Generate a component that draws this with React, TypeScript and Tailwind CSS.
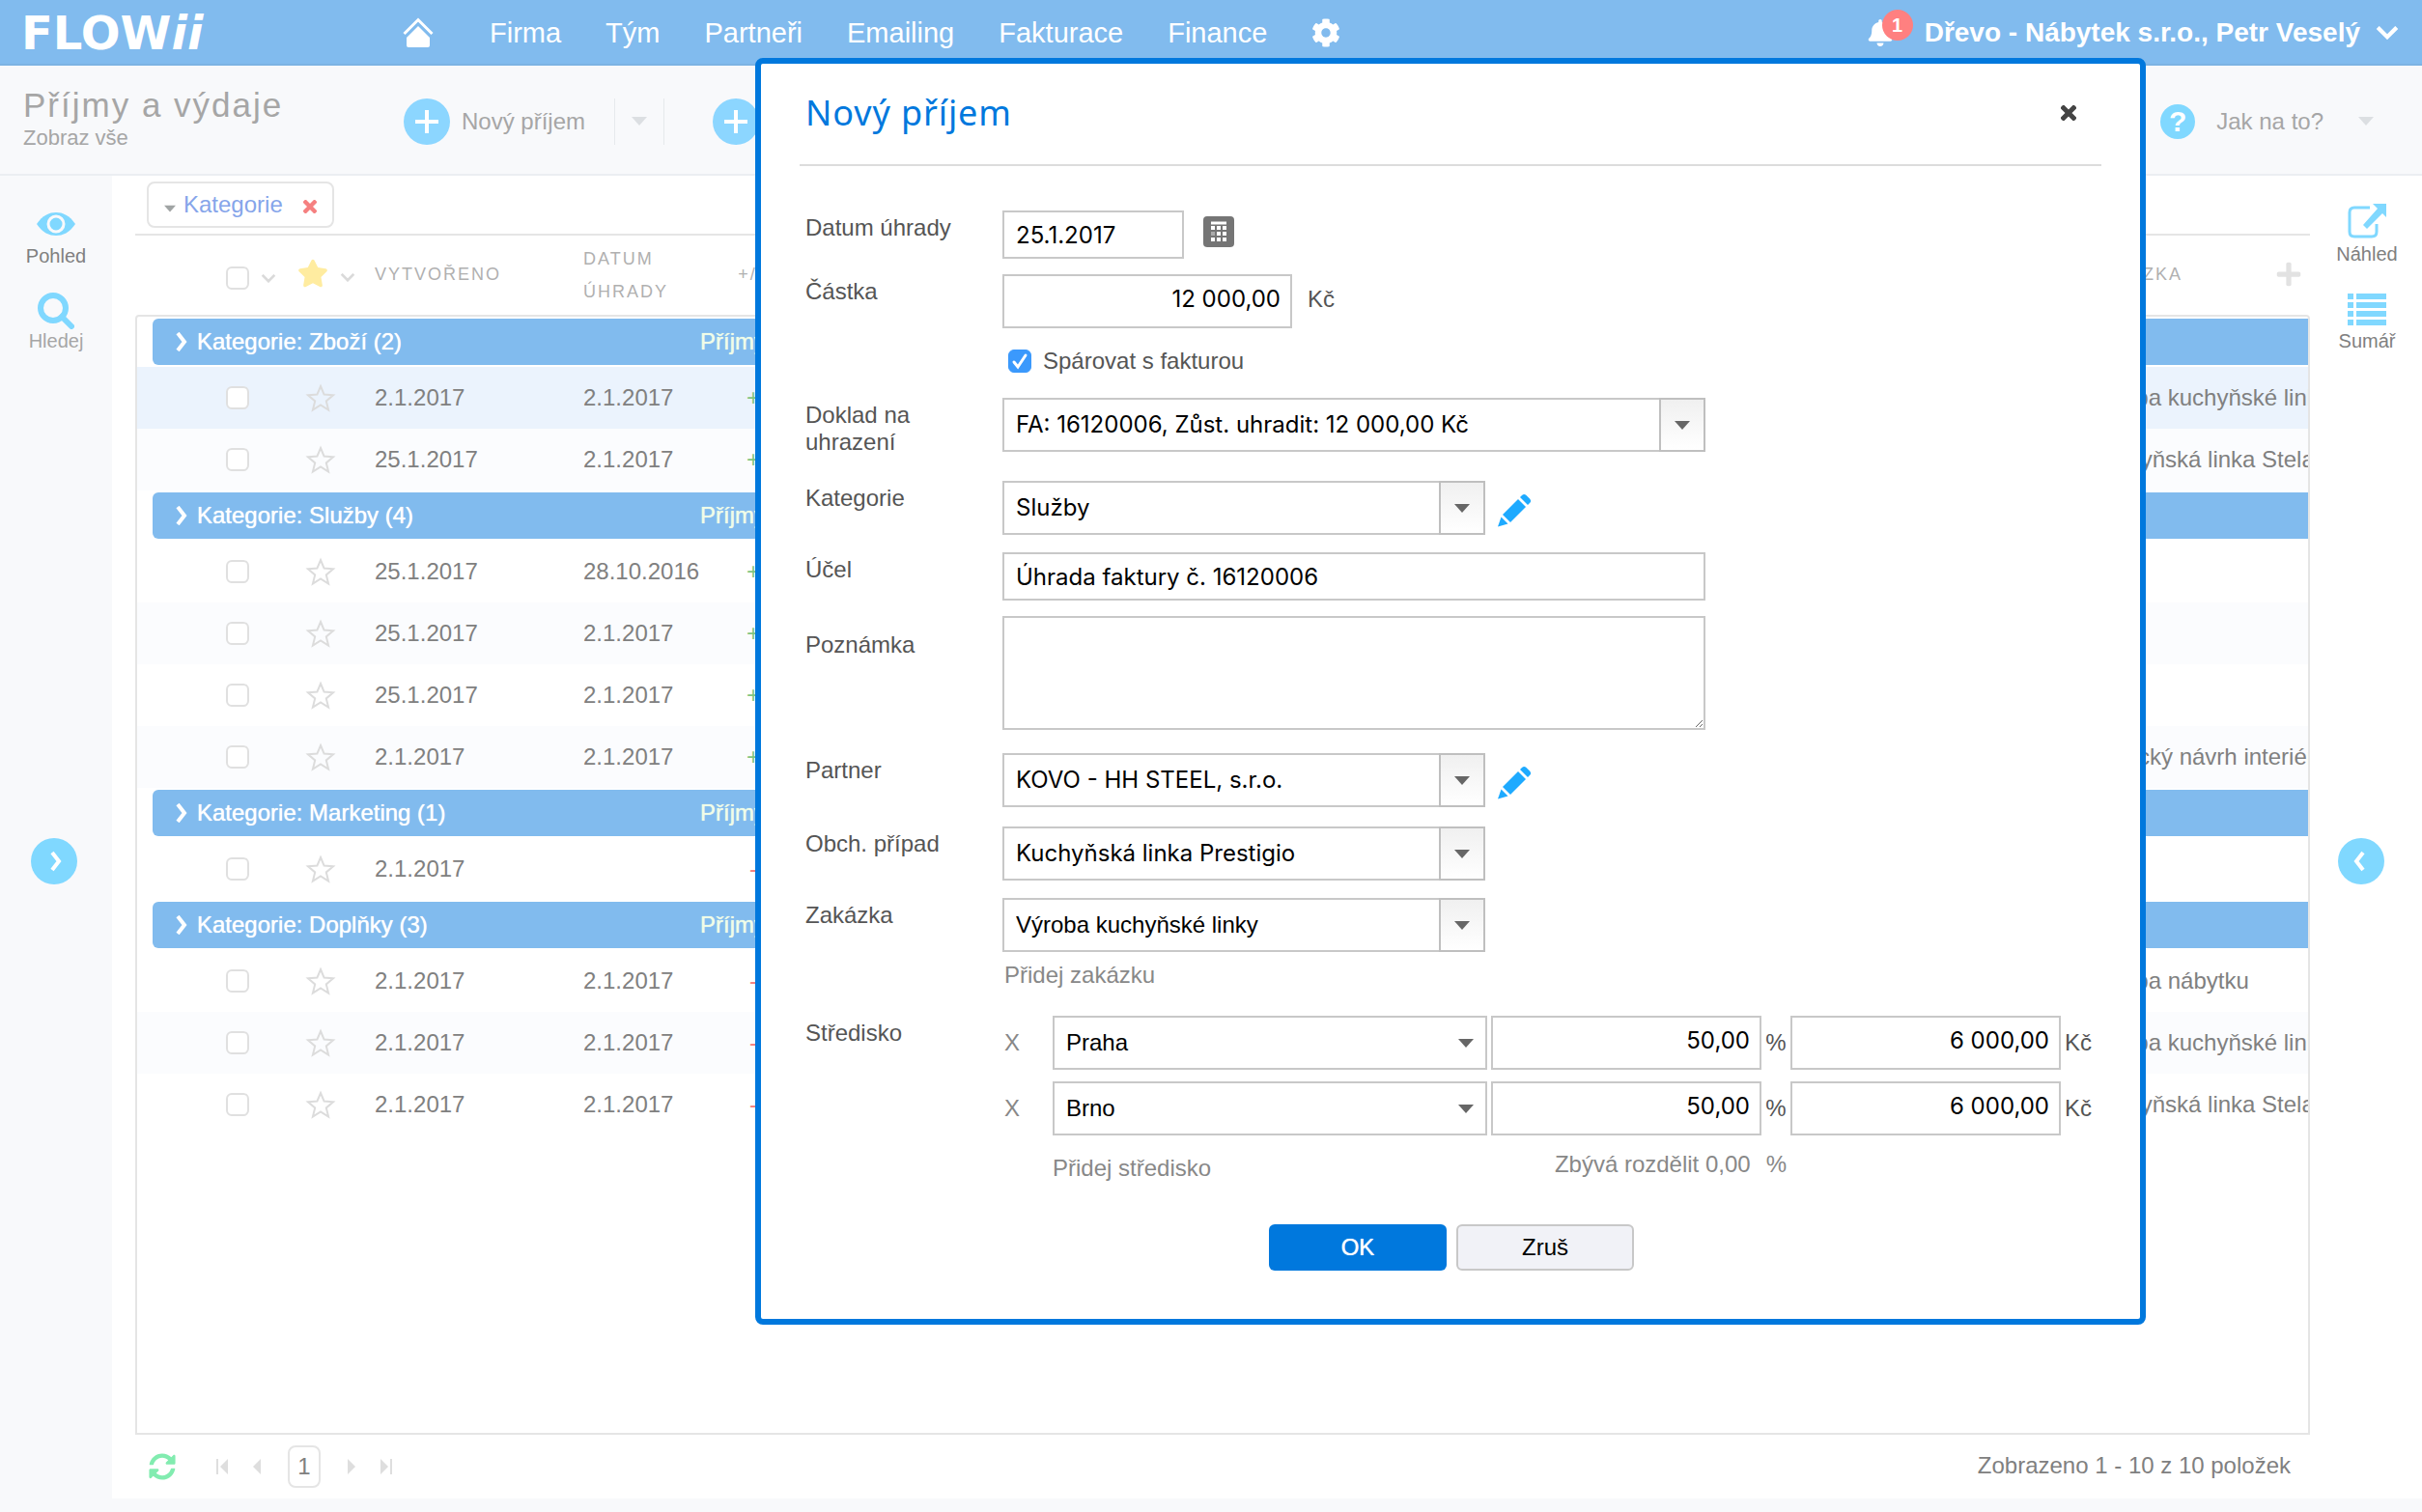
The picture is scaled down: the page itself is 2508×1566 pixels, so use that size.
import { ReactNode, useState } from "react";
import { FaBell, FaCog, FaPlus, FaStar, FaSyncAlt } from "react-icons/fa";

const nav = ["Firma", "Tým", "Partneři", "Emailing", "Fakturace", "Finance"];

type Row = {
  created: string;
  paid: string;
  sign: "+" | "-";
  order: string;
  active?: boolean;
  odd?: boolean;
};

const groups: { name: string; rows: Row[] }[] = [
  {
    name: "Kategorie: Zboží (2)",
    rows: [
      { created: "2.1.2017", paid: "2.1.2017", sign: "+", order: "Výroba kuchyňské linky", active: true },
      { created: "25.1.2017", paid: "2.1.2017", sign: "+", order: "Kuchyňská linka Stela", odd: true },
    ],
  },
  {
    name: "Kategorie: Služby (4)",
    rows: [
      { created: "25.1.2017", paid: "28.10.2016", sign: "+", order: "" },
      { created: "25.1.2017", paid: "2.1.2017", sign: "+", order: "", odd: true },
      { created: "25.1.2017", paid: "2.1.2017", sign: "+", order: "" },
      { created: "2.1.2017", paid: "2.1.2017", sign: "+", order: "Grafický návrh interiéru", odd: true },
    ],
  },
  {
    name: "Kategorie: Marketing (1)",
    rows: [{ created: "2.1.2017", paid: "", sign: "-", order: "" }],
  },
  {
    name: "Kategorie: Doplňky (3)",
    rows: [
      { created: "2.1.2017", paid: "2.1.2017", sign: "-", order: "Výroba nábytku" },
      { created: "2.1.2017", paid: "2.1.2017", sign: "-", order: "Výroba kuchyňské linky", odd: true },
      { created: "2.1.2017", paid: "2.1.2017", sign: "-", order: "Kuchyňská linka Stela" },
    ],
  },
];

const Caret = ({ className }: { className: string }) => (
  <svg viewBox="0 0 16 9" className={className} fill="currentColor">
    <path d="M0 0h16L8 9z" />
  </svg>
);

const Chevron = ({ className }: { className: string }) => (
  <svg viewBox="0 0 12 20" className={className} fill="none" stroke="currentColor" strokeWidth="4">
    <path d="M2 1l7 9-7 9" />
  </svg>
);

const ChevronDown = ({ className }: { className: string }) => (
  <svg viewBox="0 0 16 10" className={className} fill="none" stroke="currentColor" strokeWidth="3">
    <path d="M1 1l7 7 7-7" />
  </svg>
);

const Cross = ({ className }: { className: string }) => (
  <svg viewBox="0 0 16 16" className={className} fill="none" stroke="currentColor" strokeWidth="5">
    <path d="M1 1l14 14M15 1L1 15" />
  </svg>
);

const StarOutline = () => (
  <svg viewBox="0 0 32 30" className="h-[30px] w-8" fill="none" stroke="#dcdcdc" strokeWidth="2">
    <path d="M16 3l3.6 8.600 9.400.7-7.200 6.100 2.300 9.100-8.100-5-8.100 5 2.300-9.100L3 12.300l9.400-.7z" />
  </svg>
);

const PencilIcon = () => (
  <svg viewBox="0 0 36 36" className="size-9" fill="#1eaaff">
    <path d="M26 3c1.500-1.500 3-1.500 4.500 0l3.500 3.500c1.500 1.500 1.500 3 0 4.500l-2 2-8-8z" />
    <path d="M22 7l8 8-16 16-8-8z" />
    <path d="M4.500 25.500l7 7L1 35.500z" />
  </svg>
);

const CalendarIcon = () => (
  <svg viewBox="0 0 32 32" className="size-8">
    <rect width="32" height="32" rx="4" fill="#757575" />
    <path d="M8 7h16" stroke="#fff" strokeWidth="3" />
    <path
      d="M8 12h4M14 12h4M20 12h4M14 18h4M20 18h4M8 24h4M14 24h4M20 24h4"
      stroke="#fff"
      strokeWidth="4"
    />
    <path d="M8 18h4" stroke="#aaa" strokeWidth="4" />
  </svg>
);

const HomeIcon = () => (
  <svg viewBox="0 0 32 32" className="size-8">
    <path d="M1.500 17L16 2.500 30.500 17" fill="none" stroke="#fff" strokeWidth="3" />
    <path d="M16 9l12 12v8q0 2-2 2H6q-2 0-2-2v-8z" fill="#fff" />
  </svg>
);

const EyeIcon = () => (
  <svg viewBox="0 0 40 26" className="h-[26px] w-10">
    <path d="M0 13C6 4 13 1 20 1s14 3 20 12c-6 9-13 12-20 12S6 22 0 13z" fill="#80d8ff" />
    <circle cx="20" cy="13" r="8" fill="#80d8ff" stroke="#f8f9fb" strokeWidth="3" />
  </svg>
);

const SearchIcon = () => (
  <svg viewBox="0 0 38 38" className="size-[38px]" fill="none" stroke="#80d8ff">
    <circle cx="16" cy="16" r="13" strokeWidth="6" />
    <path d="M25 25l10 10" strokeWidth="6" strokeLinecap="round" />
  </svg>
);

const PreviewIcon = () => (
  <svg viewBox="0 0 40 36" className="h-9 w-10">
    <path
      d="M23 4H7Q2 4 2 9v20q0 5 5 5h18q5 0 5-5V21"
      fill="none"
      stroke="#80d8ff"
      strokeWidth="3"
    />
    <path d="M26 0h14v14l-4-4-16 16-4-4L31 5z" fill="#80d8ff" />
  </svg>
);

const SummaryIcon = () => (
  <svg viewBox="0 0 40 34" className="h-[34px] w-10" stroke="#80d8ff" strokeWidth="6">
    <path d="M0 4h6M9 4h31M0 13h6M9 13h31M0 22h6M9 22h31M0 31h6M9 31h31" />
  </svg>
);

const RowCheck = ({ label }: { label: string }) => (
  <input
    type="checkbox"
    aria-label={label}
    className="block size-6 appearance-none rounded-md border-2 border-[#e0e0e0] bg-white"
  />
);

const Columns = () => (
  <colgroup>
    <col className="w-[150px]" />
    <col className="w-24" />
    <col className="w-[216px]" />
    <col className="w-36" />
    <col className="w-16" />
    <col />
    <col className="w-[228px]" />
  </colgroup>
);

const Header = () => (
  <header className="flex h-[68px] items-center border-b-2 border-[#7cb3e3] bg-[#81bbee] pt-0.5 text-[28px] text-white">
    <a
      href="#"
      className="ml-[22px] w-[395px] font-['DejaVu_Sans',sans-serif] text-5xl leading-[60px] font-bold"
    >
      FLOW<em>ii</em>
    </a>
    <nav className="flex items-center gap-[46px] text-[29px]">
      <a href="#" aria-label="Domů" className="mr-3">
        <HomeIcon />
      </a>
      {nav.map((item) => (
        <a key={item} href="#">
          {item}
        </a>
      ))}
      <a href="#" aria-label="Nastavení">
        <FaCog className="size-[30px]" />
      </a>
    </nav>
    <div className="mr-6 ml-auto flex items-center">
      <button aria-label="Upozornění" className="relative mr-8">
        <FaBell className="size-7" />
        <span className="absolute -top-2.5 left-4 flex size-8 items-center justify-center rounded-full bg-[#ff8080] text-xl font-bold">
          1
        </span>
      </button>
      <button className="flex items-center gap-4 font-bold">
        Dřevo - Nábytek s.r.o., Petr Veselý
        <ChevronDown className="h-[14px] w-6" />
      </button>
    </div>
  </header>
);

const PlusCircle = () => (
  <span className="flex size-12 items-center justify-center rounded-full bg-[#8cd6ff]">
    <svg viewBox="0 0 24 24" className="size-6" stroke="#fff" strokeWidth="4">
      <path d="M0 12h24M12 0v24" />
    </svg>
  </span>
);

const Toolbar = () => (
  <div className="flex h-[114px] items-center border-b-2 border-[#ebeef2] bg-[#f8f9fb] pt-[3px] text-[#a6a6a6]">
    <div className="ml-6 w-[394px] pb-1.5">
      <h1 className="text-[35px] leading-10 tracking-[2px]">Příjmy a výdaje</h1>
      <a href="#" className="block text-[22px] leading-7">
        Zobraz vše
      </a>
    </div>
    <button className="flex items-center gap-3">
      <PlusCircle />
      Nový příjem
    </button>
    <button
      aria-label="Další možnosti"
      className="ml-[30px] flex h-12 w-[52px] items-center justify-center border-x border-[#e6e9ec] text-[#dcdfe2]"
    >
      <Caret className="h-[9px] w-4" />
    </button>
    <button aria-label="Nový výdaj" className="ml-[50px]">
      <PlusCircle />
    </button>
    <button className="mr-[50px] ml-auto flex items-center">
      <span className="mr-[22px] flex size-9 items-center justify-center rounded-full bg-[#80d8ff] text-[30px] font-bold text-white">
        ?
      </span>
      Jak na to?
      <Caret className="ml-9 h-[9px] w-4 text-[#dcdfe2]" />
    </button>
  </div>
);

const GroupRow = ({ name }: { name: string }) => (
  <tr>
    <td colSpan={7} className="p-0">
      <div className="my-0.5 ml-4 flex h-12 items-center rounded-l-md bg-[#81bbee] pl-6 text-white">
        <Chevron className="mr-[10px] h-5 w-3" />
        <span className="w-[521px] [text-shadow:0_0_1px_#fff]">{name}</span>
        <span className="text-[#f0fde8] [text-shadow:0_0_1px_#f0fde8]">Příjmy</span>
      </div>
    </td>
  </tr>
);

const Grid = () => (
  <main className="flex min-w-0 flex-1 flex-col bg-white pr-[2px] pl-6 text-[#808080]">
    <div className="flex h-[62px] items-center border-b-2 border-[#e5e5e5] pl-3">
      <div className="flex h-12 items-center rounded-lg border-2 border-[#e5e5e5] px-4">
        <Caret className="mt-2 mr-2 h-2 w-3 text-[#a0a4a4]" />
        <a href="#" className="text-[#86a5ea]">
          Kategorie
        </a>
        <button aria-label="Zrušit seskupení" className="ml-[21px]">
          <Cross className="mt-1 size-[14px] text-[#f58080]" />
        </button>
      </div>
    </div>
    <table className="w-full table-fixed text-lg">
      <Columns />
      <thead>
        <tr className="h-[82px] text-left leading-[34px] tracking-[2px] text-[#b0b0b0] uppercase">
          <th className="p-0 pl-[94px] font-normal">
            <span className="mt-1.5 flex items-center gap-3 text-[#dadada]">
              <RowCheck label="Vybrat vše" />
              <ChevronDown className="h-[9px] w-4" />
            </span>
          </th>
          <th className="p-0 pb-1 pl-[18px] font-normal">
            <span className="flex items-center gap-3 text-[#dadada]">
              <FaStar className="size-8 text-[#ffeca0]" />
              <ChevronDown className="mt-2 h-[9px] w-4 shrink-0" />
            </span>
          </th>
          <th className="p-0 pb-0.5 pl-0.5 font-normal">Vytvořeno</th>
          <th className="p-0 pr-10 pl-0.5 font-normal">Datum úhrady</th>
          <th className="p-0 pb-0.5 text-center font-normal">+/-</th>
          <th className="p-0" />
          <th className="p-0 pb-0.5 font-normal">
            <span className="flex items-center justify-between pr-2">
              Zakázka
              <FaPlus className="size-7 text-[#e2e2e2]" />
            </span>
          </th>
        </tr>
      </thead>
    </table>
    <div className="flex-1 overflow-hidden rounded-t border-2 border-[#e5e5e5]">
      <table className="w-full table-fixed">
        <Columns />
        <tbody>
          {groups.map((group) => [
            <GroupRow key={group.name} name={group.name} />,
            ...group.rows.map((row, i) => (
              <tr
                key={group.name + i}
                className={`h-16 ${row.active ? "bg-[#ebf3fd]" : row.odd ? "bg-[#fbfcfe]" : "bg-white"}`}
              >
                <td className="p-0 pl-[92px]">
                  <RowCheck label="Vybrat řádek" />
                </td>
                <td className="p-0 pl-6">
                  <button aria-label="Označit hvězdičkou" className="block">
                    <StarOutline />
                  </button>
                </td>
                <td className="p-0">{row.created}</td>
                <td className="p-0">{row.paid}</td>
                <td
                  className={`p-0 text-center ${row.sign === "+" ? "text-[#80c580]" : "text-[#f58080]"}`}
                >
                  {row.sign}
                </td>
                <td className="p-0" />
                <td className="overflow-hidden p-0 whitespace-nowrap">{row.order}</td>
              </tr>
            )),
          ])}
        </tbody>
      </table>
    </div>
    <div className="flex h-[66px] items-center pr-5 pl-[14px] text-[#dedede]">
      <button aria-label="Obnovit" className="mr-[42px]">
        <FaSyncAlt className="size-7 text-[#82ecb0]" />
      </button>
      <button aria-label="První strana">
        <svg viewBox="0 0 12 16" className="h-4 w-3" fill="currentColor">
          <path d="M0 0h2v16H0zM12 0v16L4 8z" />
        </svg>
      </button>
      <button aria-label="Předchozí strana" className="ml-[26px]">
        <svg viewBox="0 0 8 16" className="h-4 w-2" fill="currentColor">
          <path d="M8 0v16L0 8z" />
        </svg>
      </button>
      <button className="mx-7 h-11 w-[34px] rounded-lg border-2 border-[#e5e5e5] text-[#808080]">
        1
      </button>
      <button aria-label="Další strana">
        <svg viewBox="0 0 8 16" className="h-4 w-2" fill="currentColor">
          <path d="M0 0v16l8-8z" />
        </svg>
      </button>
      <button aria-label="Poslední strana" className="ml-[26px]">
        <svg viewBox="0 0 12 16" className="h-4 w-3" fill="currentColor">
          <path d="M10 0h2v16h-2zM0 0v16l8-8z" />
        </svg>
      </button>
      <span className="ml-auto pb-0.5 text-[#808080]">Zobrazeno 1 - 10 z 10 položek</span>
    </div>
  </main>
);

const FormRow = ({
  label,
  id,
  className,
  children,
}: {
  label: string;
  id: string;
  className: string;
  children: ReactNode;
}) => (
  <div className={`flex items-start ${className}`}>
    <label htmlFor={id} className="w-[204px] shrink-0 pt-1 pr-10">
      {label}
    </label>
    {children}
  </div>
);

const Combo = ({
  id,
  value,
  className,
  plain,
}: {
  id: string;
  value: string;
  className: string;
  plain?: boolean;
}) => (
  <div className={`relative h-14 ${className}`}>
    <select
      id={id}
      aria-label={value}
      className="size-full appearance-none border-2 border-[#c8c8c8] bg-white px-3 text-black"
    >
      <option>{value}</option>
    </select>
    <span
      className={`pointer-events-none absolute inset-y-0 right-0 flex items-center justify-center text-[#666] ${
        plain ? "w-11" : "w-12 border-2 border-[#bfbfbf] bg-linear-to-b from-[#f0f0f0] to-white"
      }`}
    >
      <Caret className="h-[9px] w-4" />
    </span>
  </div>
);

const inter = "font-['Inter',sans-serif]";
const field = `border-2 border-[#c8c8c8] bg-white pl-3 pr-2.5 text-black ${inter}`;

const CenterRow = ({ id, name }: { id: string; name: string }) => (
  <div className="flex items-center">
    <button type="button" aria-label="Odebrat" className="w-[52px] pl-0.5 text-left text-[#888]">
      X
    </button>
    <Combo id={id} value={name} className="w-[450px]" plain />
    <input
      aria-label="Podíl v %"
      defaultValue="50,00"
      className={`ml-1 h-14 w-[280px] pb-1.5 text-right ${field}`}
    />
    <span className="w-[30px] text-center">%</span>
    <input
      aria-label="Částka v Kč"
      defaultValue="6 000,00"
      className={`h-14 w-[280px] pb-1.5 text-right ${field}`}
    />
    <span className="ml-1">Kč</span>
  </div>
);

const IncomeDialog = () => {
  const [paired, setPaired] = useState(true);

  return (
    <div
      role="dialog"
      aria-labelledby="dialog-title"
      className="absolute top-[60px] left-[782px] w-[1440px] rounded-lg border-6 border-[#0078dd] bg-white px-10 pb-[50px] leading-7 text-[#555]"
    >
      <div className="flex h-[106px] items-center justify-between border-b-2 border-[#dcdcdc] pr-[26px] pb-0.5 pl-[6px]">
        <h2
          id="dialog-title"
          className="font-['Noto_Sans',sans-serif] text-4xl tracking-wide text-[#0078dd]"
        >
          Nový příjem
        </h2>
        <button aria-label="Zavřít">
          <Cross className="size-4 text-[#444]" />
        </button>
      </div>
      <form className="pl-[6px]" onSubmit={(e) => e.preventDefault()}>
        <FormRow label="Datum úhrady" id="date" className="mt-[46px]">
          <input id="date" defaultValue="25.1.2017" className={`h-[50px] w-[188px] ${field}`} />
          <button type="button" aria-label="Kalendář" className="mt-1.5 ml-5">
            <CalendarIcon />
          </button>
        </FormRow>
        <FormRow label="Částka" id="amount" className="mt-4">
          <input
            id="amount"
            defaultValue="12 000,00"
            className={`h-14 w-[300px] pb-1.5 text-right ${field}`}
          />
          <span className="mt-3 ml-4">Kč</span>
        </FormRow>
        <label className="mt-5 ml-[210px] flex items-center gap-3">
          <span className="relative size-6">
            <input
              type="checkbox"
              checked={paired}
              onChange={() => setPaired(!paired)}
              className="block size-6 appearance-none rounded-md border border-[#c8c8c8] bg-white checked:border-[#3b99fc] checked:bg-[#3b99fc]"
            />
            {paired && (
              <svg
                viewBox="0 0 24 24"
                className="pointer-events-none absolute inset-0"
                fill="none"
                stroke="#fff"
                strokeWidth="3"
                strokeLinecap="round"
              >
                <path d="M6 13l4 5 8-12" />
              </svg>
            )}
          </span>
          Spárovat s fakturou
        </label>
        <FormRow label="Doklad na uhrazení" id="invoice" className="mt-6">
          <Combo
            id="invoice"
            value="FA: 16120006, Zůst. uhradit: 12 000,00 Kč"
            className={`w-[728px] ${inter}`}
          />
        </FormRow>
        <FormRow label="Kategorie" id="category" className="mt-[26px]">
          <Combo id="category" value="Služby" className={`w-[500px] ${inter}`} />
          <button type="button" aria-label="Upravit kategorii" className="mt-3 ml-3">
            <PencilIcon />
          </button>
        </FormRow>
        <FormRow label="Účel" id="purpose" className="mt-[18px]">
          <input
            id="purpose"
            defaultValue="Úhrada faktury č. 16120006"
            className={`h-[50px] w-[728px] ${field}`}
          />
        </FormRow>
        <div className="mt-4 flex">
          <label htmlFor="note" className="w-[204px] pt-4">
            Poznámka
          </label>
          <textarea id="note" className={`block h-[118px] w-[728px] ${field}`} />
        </div>
        <FormRow label="Partner" id="partner" className="mt-6">
          <Combo id="partner" value="KOVO - HH STEEL, s.r.o." className={`w-[500px] ${inter}`} />
          <button type="button" aria-label="Upravit partnera" className="mt-3 ml-3">
            <PencilIcon />
          </button>
        </FormRow>
        <FormRow label="Obch. případ" id="deal" className="mt-5">
          <Combo id="deal" value="Kuchyňská linka Prestigio" className={`w-[500px] ${inter}`} />
        </FormRow>
        <FormRow label="Zakázka" id="order" className="mt-[18px]">
          <div>
            <Combo id="order" value="Výroba kuchyňské linky" className="w-[500px]" />
            <a href="#" className="mt-[10px] ml-0.5 block text-[#888]">
              Přidej zakázku
            </a>
          </div>
        </FormRow>
        <FormRow label="Středisko" id="center-1" className="mt-7">
          <div>
            <div className="flex flex-col gap-3">
              <CenterRow id="center-1" name="Praha" />
              <CenterRow id="center-2" name="Brno" />
            </div>
            <div className="mt-4 ml-[52px] flex w-[760px] items-start justify-between text-[#888]">
              <a href="#" className="mt-1">
                Přidej středisko
              </a>
              <span className="flex gap-4">
                Zbývá rozdělit 0,00 <span>%</span>
              </span>
            </div>
          </div>
        </FormRow>
        <div className="mt-11 flex justify-center gap-[10px] pr-1">
          <button className="h-12 w-[184px] rounded-md bg-[#0078dd] text-white [text-shadow:0_0_1px_#fff]">
            OK
          </button>
          <button
            type="button"
            className="h-12 w-[184px] rounded-md border-2 border-[#c8c8c8] bg-[#f1f2f7] text-black"
          >
            Zruš
          </button>
        </div>
      </form>
    </div>
  );
};

export default function App() {
  return (
    <div className="relative flex min-h-screen flex-col overflow-hidden bg-[#f8f9fb] font-['Liberation_Sans',Arial,sans-serif] text-2xl">
      <Header />
      <Toolbar />
      <div className="mb-[14px] flex flex-1">
        <aside className="flex w-[116px] flex-col items-center text-xl text-[#808080]">
          <button className="mt-[37px] flex flex-col items-center gap-1.5">
            <EyeIcon />
            Pohled
          </button>
          <button className="mt-6 flex flex-col items-center text-[#a6a6a6]">
            <SearchIcon />
            <span className="leading-6">Hledej</span>
          </button>
          <button
            aria-label="Rozbalit panel"
            className="mt-[503px] mr-1 flex size-12 items-center justify-center rounded-full bg-[#80d8ff] text-white"
          >
            <Chevron className="ml-1 h-6 w-3" />
          </button>
        </aside>
        <Grid />
        <aside className="flex w-[114px] flex-col items-center bg-white text-xl text-[#808080]">
          <button className="mt-[29px] flex flex-col items-center gap-0.5">
            <PreviewIcon />
            Náhled
          </button>
          <button className="mt-[26px] flex flex-col items-center gap-0.5">
            <SummaryIcon />
            Sumář
          </button>
          <button
            aria-label="Rozbalit náhled"
            className="mt-[501px] mr-3 flex size-12 items-center justify-center rounded-full bg-[#80d8ff] text-white"
          >
            <Chevron className="mr-1 h-6 w-3 rotate-180" />
          </button>
        </aside>
      </div>
      <IncomeDialog />
    </div>
  );
}
